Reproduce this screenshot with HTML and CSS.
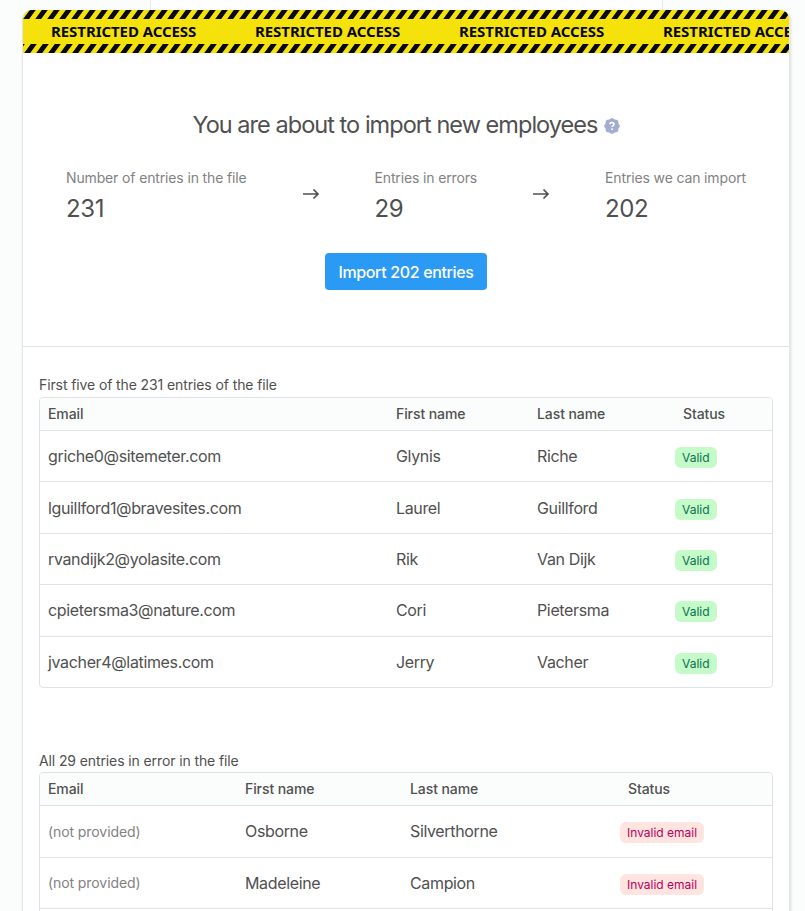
FILE: index.html
```html
<!DOCTYPE html>
<html lang="en">
<head>
<meta charset="utf-8">
<title>Import employees</title>
<link rel="stylesheet" href="styles.css">
</head>
<body>
<div class="backdrop"></div>
<main class="card">
  <div class="tape">
    <svg class="stripes"><defs><pattern id="top" width="12" height="9" patternUnits="userSpaceOnUse"><path d="M6.8 0H12.8L6.2 9H.2ZM-5.2 0H.8L-5.8 9H-11.8Z"/></pattern></defs><rect width="100%" height="9" fill="url(#top)"/></svg>
    <div class="labels">
      <span class="tape-label">RESTRICTED ACCESS</span>
      <span class="tape-label">RESTRICTED ACCESS</span>
      <span class="tape-label">RESTRICTED ACCESS</span>
      <span class="tape-label">RESTRICTED ACCESS</span>
    </div>
    <svg class="stripes"><defs><pattern id="bottom" width="12" height="9" patternUnits="userSpaceOnUse"><path d="M7.8 0H13.8L7.2 9H1.2ZM-4.2 0H1.8L-4.8 9H-10.8Z"/></pattern></defs><rect width="100%" height="9" fill="url(#bottom)"/></svg>
  </div>
  <section class="summary">
    <h1 class="title"><span>You are about to import new employees</span>
      <svg class="help" viewBox="0 0 16 16"><path class="help-badge" d="M8 0 10.6 1.6 13.7 2.3 14.4 5.4 16 8 14.4 10.6 13.7 13.7 10.6 14.4 8 16 5.4 14.4 2.3 13.7 1.6 10.6 0 8 1.6 5.4 2.3 2.3 5.4 1.6Z"/><path class="help-mark" d="M6 6.2C6.1 3.9 10.1 4 10 6.3 9.9 7.7 8.1 7.6 8.1 9"/><circle cx="8.1" cy="11.2" r="1" fill="#fff"/></svg>
    </h1>
    <div class="stats">
      <div class="stat"><span class="stat-label">Number of entries in the file</span><span class="stat-value">231</span></div>
      <svg class="arrow" viewBox="0 0 18 12"><path d="M1 6H16M11.5 1.5 16 6 11.5 10.5"/></svg>
      <div class="stat"><span class="stat-label">Entries in errors</span><span class="stat-value">29</span></div>
      <svg class="arrow" viewBox="0 0 18 12"><path d="M1 6H16M11.5 1.5 16 6 11.5 10.5"/></svg>
      <div class="stat"><span class="stat-label">Entries we can import</span><span class="stat-value">202</span></div>
    </div>
    <button class="import">Import 202 entries</button>
  </section>
  <section class="preview">
    <h2 class="caption">First five of the 231 entries of the file</h2>
    <div class="table valid">
      <div class="row head"><span>Email</span><span>First name</span><span>Last name</span><span class="status">Status</span></div>
      <div class="row"><span>griche0@sitemeter.com</span><span>Glynis</span><span>Riche</span><span><b class="tag ok">Valid</b></span></div>
      <div class="row"><span>lguillford1@bravesites.com</span><span>Laurel</span><span>Guillford</span><span><b class="tag ok">Valid</b></span></div>
      <div class="row"><span>rvandijk2@yolasite.com</span><span>Rik</span><span>Van Dijk</span><span><b class="tag ok">Valid</b></span></div>
      <div class="row"><span>cpietersma3@nature.com</span><span>Cori</span><span>Pietersma</span><span><b class="tag ok">Valid</b></span></div>
      <div class="row"><span>jvacher4@latimes.com</span><span>Jerry</span><span>Vacher</span><span><b class="tag ok">Valid</b></span></div>
    </div>
    <h2 class="caption">All 29 entries in error in the file</h2>
    <div class="table errors">
      <div class="row head"><span>Email</span><span>First name</span><span>Last name</span><span class="status">Status</span></div>
      <div class="row"><span class="missing">(not provided)</span><span>Osborne</span><span>Silverthorne</span><span><b class="tag bad">Invalid email</b></span></div>
      <div class="row"><span class="missing">(not provided)</span><span>Madeleine</span><span>Campion</span><span><b class="tag bad">Invalid email</b></span></div>
      <div class="row"></div>
    </div>
  </section>
</main>
</body>
</html>
```
FILE: styles.css
```css
* { box-sizing: border-box; }
html, body { height: 100%; margin: 0; }
body {
  background: #fbfdfc;
  color: #505050;
  font-family: Inter, "Liberation Sans", sans-serif;
  font-size: 16px;
  letter-spacing: -0.35px;
  overflow: hidden;
}
.backdrop {
  width: 513px;
  height: 10px;
  margin-left: 150px;
  background: #fff;
  border: solid #ebecef;
  border-width: 0 1px;
}
.card {
  width: 768px;
  height: 940px;
  margin-left: 22px;
  background: #fff;
  border: 1px solid #e5e6e9;
  border-top: 0;
  border-radius: 9px 9px 0 0;
  box-shadow: 1px 1px 3px rgba(0, 0, 0, .12);
  overflow: hidden;
}
.tape {
  height: 43px;
  background: #f6e20b;
  overflow: hidden;
}
.stripes { display: block; width: 100%; height: 9px; fill: #08090f; }
.labels {
  display: flex;
  gap: 58px;
  height: 25px;
  padding: 0 28px 1px;
  align-items: center;
}
.tape-label {
  flex: 0 0 146px;
  color: #08090f;
  font: 700 15px/24px "Noto Sans", sans-serif;
  letter-spacing: -0.07px;
  white-space: nowrap;
}
.summary {
  display: flex;
  flex-direction: column;
  align-items: center;
  height: 294px;
  border-bottom: 1px solid #dfe2e9;
}
.title {
  display: flex;
  align-items: center;
  gap: 6px;
  height: 32px;
  margin: 56px 0 0;
  font-size: 23.5px;
  font-weight: 400;
  letter-spacing: -0.96px;
  line-height: 30px;
  white-space: nowrap;
}
.title span { margin-top: -1px; }
.help { width: 16px; height: 16px; margin-top: 2px; }
.help-badge { fill: #a3add0; stroke: #a3add0; stroke-linejoin: round; stroke-width: .3; }
.help-mark { fill: none; stroke: #fff; stroke-width: 1.7; }
.stats {
  display: flex;
  justify-content: space-between;
  width: 680px;
  height: 54px;
  margin-top: 27px;
}
.stat { display: flex; flex-direction: column; white-space: nowrap; }
.stat-label { color: #828282; font-size: 14px; line-height: 20px; letter-spacing: -0.14px; }
.stat-value { font-size: 24px; line-height: 32px; margin-top: 5px; letter-spacing: -0.4px; }
.arrow { width: 18px; height: 12px; margin-top: 20px; fill: none; stroke: #505050; stroke-width: 1.7; }
.import {
  width: 162px;
  height: 37px;
  margin-top: 31px;
  padding: 1px 0 0;
  border: 0;
  border-radius: 4px;
  background: #2b9af5;
  color: #fff;
  font: 500 16px Inter, sans-serif;
  letter-spacing: -0.35px;
}
.preview { padding: 28px 16px 0; }
.caption { margin: 0; font-size: 14px; font-weight: 400; line-height: 20px; padding-bottom: 2px; letter-spacing: -0.11px; }
.table { margin-bottom: 62px; border: 1px solid #dfe2e9; border-radius: 4px; overflow: hidden; }
.table + .caption { padding: 1px 0; }
.row {
  display: grid;
  align-items: center;
  height: 51.4px;
  padding-left: 8px;
  border-top: 1px solid #dfe2e9;
}
.valid .row { grid-template-columns: 348px 141px 138px 1fr; }
.errors .row { grid-template-columns: 197px 165px 210px 1fr; height: 51.6px; }
.table .row.head {
  height: 32px;
  border-top: 0;
  background: #fbfdfc;
  font-size: 14px;
  font-weight: 500;
  line-height: 18px;
  letter-spacing: -0.084px;
}
.valid .head { padding-bottom: 1px; }
.errors .head { padding-top: 1px; }
.status { padding-left: 8px; }
.missing { color: #828282; font-size: 14px; letter-spacing: -0.084px; }
.tag {
  display: block;
  width: max-content;
  height: 21px;
  margin-top: 3px;
  padding: 0 7px;
  border-radius: 6px;
  font-size: 12px;
  font-weight: 400;
  line-height: 21px;
  letter-spacing: 0;
}
.ok { background: #c5fac9; color: #087350; }
.bad { background: #ffe4df; color: #b9005c; }
```
